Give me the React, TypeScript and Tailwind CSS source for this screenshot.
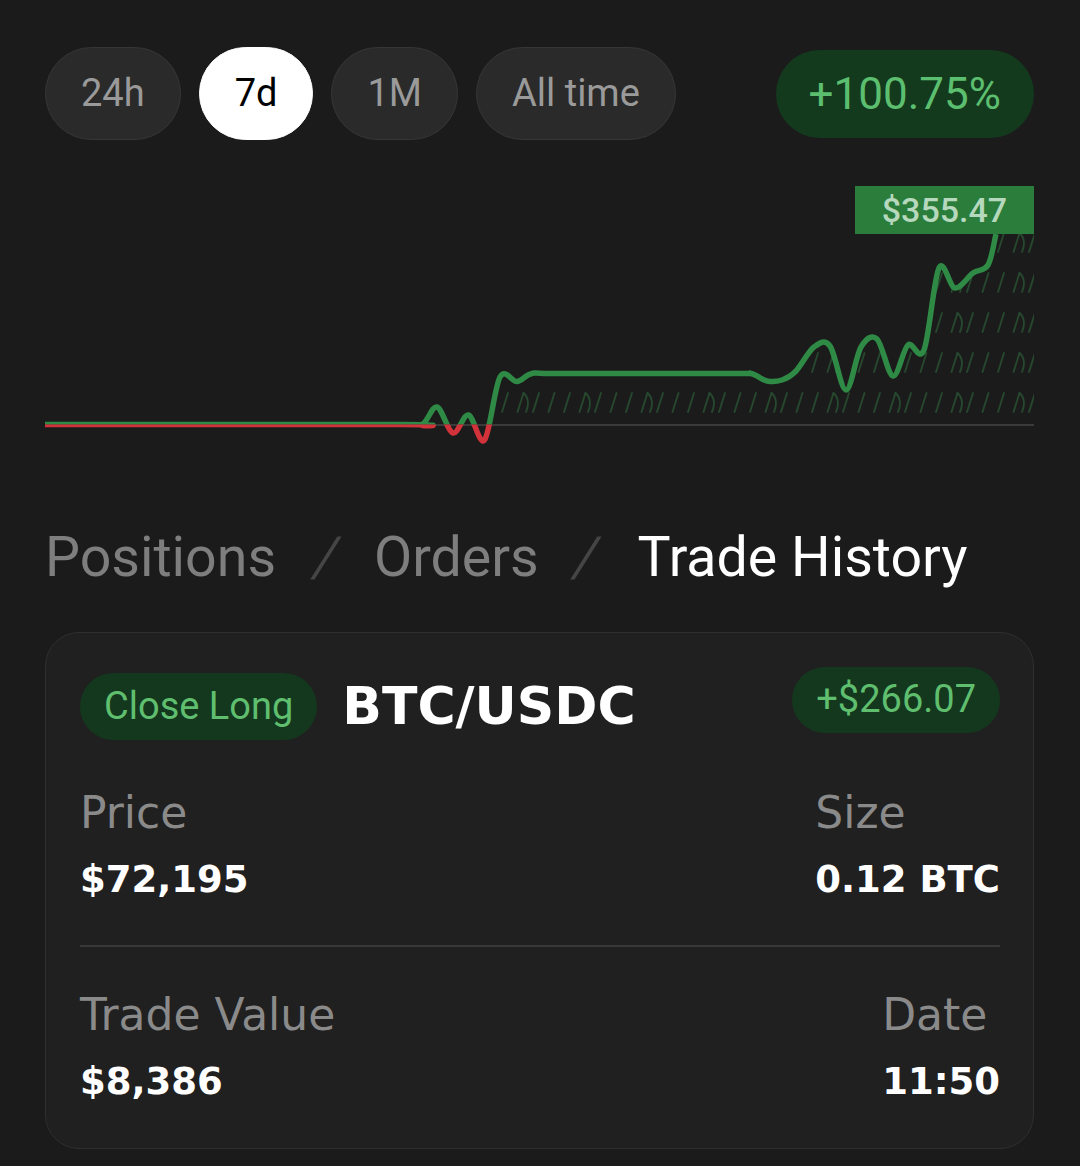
import React from "react";

const roboto = { fontFamily: "Roboto, 'Liberation Sans', sans-serif" };
const body = { fontFamily: "'DejaVu Sans', 'Noto Sans', sans-serif" };

type Pt = [number, number];

const points: Pt[] = [
  [45, 424.5], [400, 424.5], [422, 424.5], [437, 407], [453, 433], [468.5, 415],
  [484.5, 440], [500, 377], [517, 381.5], [532, 373.5], [560, 373.5], [730, 373.5],
  [751, 373.5], [767, 381], [782, 380], [796, 371], [814, 347], [830, 346],
  [846, 390], [861, 347], [877, 339], [893, 376], [908, 345], [924, 350],
  [939, 268], [955, 288], [973, 273], [988, 265], [996, 234],
];

function smoothPath(pts: Pt[]) {
  let d = `M${pts[0][0]},${pts[0][1]}`;
  for (let i = 0; i < pts.length - 1; i++) {
    const p0 = pts[i - 1] || pts[i];
    const p1 = pts[i];
    const p2 = pts[i + 1];
    const p3 = pts[i + 2] || p2;
    const c1x = p1[0] + (p2[0] - p0[0]) / 6;
    const c1y = p1[1] + (p2[1] - p0[1]) / 6;
    const c2x = p2[0] - (p3[0] - p1[0]) / 6;
    const c2y = p2[1] - (p3[1] - p1[1]) / 6;
    d += ` C${c1x},${c1y} ${c2x},${c2y} ${p2[0]},${p2[1]}`;
  }
  return d;
}

const Chart = () => {
  const line = smoothPath(points);
  const area = `${line} L1034,234 L1034,425 L45,425 Z`;
  return (
    <div className="relative mt-[40px] h-[280px]">
      <svg width="989" height="280" viewBox="45 180 989 280" className="block">
        <defs>
          <pattern id="hatch" patternUnits="userSpaceOnUse" x="500" y="392" width="62" height="40">
            <g stroke="#26492e" strokeWidth="1.8" fill="none" strokeLinecap="round">
              <path d="M2,20 L8,1" />
              <path d="M17.5,20 L23.5,1" />
              <path d="M23.5,1 Q31,8 26,20" />
              <path d="M33,20 L39,1" />
              <path d="M48.5,20 L54.5,1" />
            </g>
          </pattern>
          <clipPath id="above">
            <rect x="45" y="180" width="989" height="244.5" />
          </clipPath>
          <clipPath id="below">
            <rect x="45" y="424.5" width="989" height="40" />
          </clipPath>
          <clipPath id="hatchClip">
            <rect x="490" y="180" width="544" height="243" />
          </clipPath>
        </defs>
        <g clipPath="url(#hatchClip)">
          <path d={area} fill="url(#hatch)" />
        </g>
        <line x1="45" y1="425" x2="1034" y2="425" stroke="#3a3a3a" strokeWidth="2" />
        <g clipPath="url(#above)">
          <path d={line} fill="none" stroke="#2e8a45" strokeWidth="5.5" strokeLinejoin="round" />
        </g>
        <g clipPath="url(#below)">
          <path d={line} fill="none" stroke="#d2333b" strokeWidth="5.5" strokeLinejoin="round" />
        </g>
      </svg>
      <div
        className="absolute right-0 top-[6px] flex h-[48px] w-[179px] items-center justify-center bg-[#2b7d3c] text-[34px] font-medium text-[#b6d8bc]"
        style={roboto}
      >
        $355.47
      </div>
    </div>
  );
};

const periods = ["24h", "7d", "1M", "All time"];

const Stat = ({ label, value }: { label: string; value: string }) => (
  <div>
    <div className="text-[44px] leading-[50px] text-[#8a8a8a]" style={body}>{label}</div>
    <div className="mt-[17px] text-[37px] font-bold leading-[50px] text-white" style={body}>{value}</div>
  </div>
);

export default function App() {
  return (
    <div className="min-h-[1166px] bg-[#1b1b1b] pl-[45px] pr-[46px] pt-[47px]">
      <div className="flex items-center justify-between">
        <div className="flex gap-[18px]" style={roboto}>
          {periods.map((p) => (
            <div
              key={p}
              className={
                p === "7d"
                  ? "flex h-[93px] items-center rounded-full border border-white bg-white px-[35px] text-[38px] text-black"
                  : "flex h-[93px] items-center rounded-full border border-[#363636] bg-[#2a2a2a] px-[35px] text-[38px] text-[#9a9a9a]"
              }
            >
              {p}
            </div>
          ))}
        </div>
        <div
          className="flex h-[88px] items-center rounded-full bg-[#143a1e] px-[33px] text-[44px] text-[#5cbf6f]"
          style={roboto}
        >
          +100.75%
        </div>
      </div>

      <Chart />

      <div className="mt-[70px] flex items-baseline text-[55.5px] leading-none" style={roboto}>
        <span className="text-[#7e7e7e]">Positions</span>
        <span className="ml-[39px] mr-[36px] inline-block -skew-x-[14deg] text-[#454545]">/</span>
        <span className="text-[#7e7e7e]">Orders</span>
        <span className="ml-[36px] mr-[40px] inline-block -skew-x-[14deg] text-[#454545]">/</span>
        <span className="text-white">Trade History</span>
      </div>

      <div className="mt-[46px] rounded-[34px] border border-[#2f2f2f] bg-[#202020] pb-[41px] pl-[34px] pr-[33px] pt-[34px]">
        <div className="flex items-start justify-between">
          <div className="mt-[6px] flex items-center gap-[25px]">
            <div
              className="flex h-[67px] items-center rounded-full bg-[#14381e] px-[24px] text-[38px] text-[#5fbf6f]"
              style={roboto}
            >
              Close Long
            </div>
            <div className="text-[52px] font-bold leading-none text-white" style={body}>
              BTC/USDC
            </div>
          </div>
          <div
            className="flex h-[66px] items-center rounded-full bg-[#14381e] px-[24px] text-[38px] text-[#5fbf6f]"
            style={roboto}
          >
            +$266.07
          </div>
        </div>

        <div className="mt-[48px] flex justify-between">
          <Stat label="Price" value="$72,195" />
          <Stat label="Size" value="0.12 BTC" />
        </div>

        <div className="mt-[40px] h-[2px] bg-[#383838]" />

        <div className="mt-[43px] flex justify-between">
          <Stat label="Trade Value" value="$8,386" />
          <Stat label="Date" value="11:50" />
        </div>
      </div>
    </div>
  );
}
